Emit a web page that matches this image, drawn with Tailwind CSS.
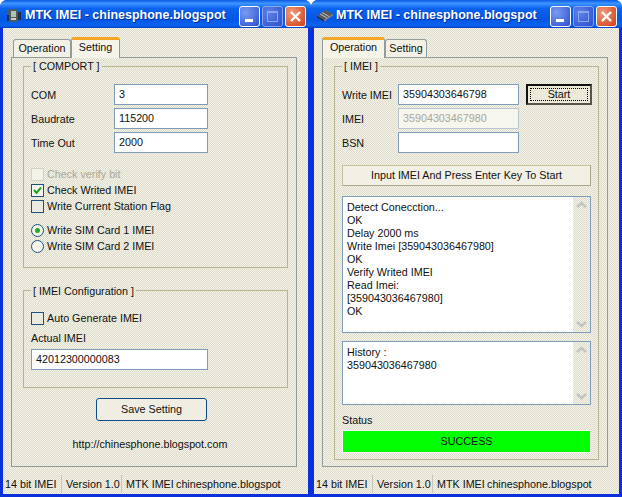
<!DOCTYPE html>
<html lang="en">
<head>
  <meta charset="UTF-8" />
  <title>MTK IMEI</title>
  <script src="https://cdn.jsdelivr.net/npm/@tailwindcss/browser@4"></script>
</head>
<body class="bg-white">
  <div class="flex w-[622px] h-[497px] overflow-hidden font-['Liberation_Sans',sans-serif] text-[10.75px] leading-4 text-[#111]">

    <!-- left window: setting tab -->
    <div class="w-[311px] h-[497px] flex flex-col rounded-t-[7px] overflow-hidden bg-[#0a2fdc]">
      <div class="h-[28px] shrink-0 flex items-center pt-[2px] pl-[5px] pr-[5px] bg-[linear-gradient(#0a5ae6_0%,#3d95ff_12%,#0a63ee_30%,#0555e4_70%,#0a64f0_90%,#0340c8_100%)]">
        <svg width="18" height="18" viewBox="0 0 18 18" class="shrink-0"><path d="M4 3h7l2 2v10l-2 1H5l-2-1V5z" fill="#4c5c58"/><path d="M6 5h5v6H6z" fill="#a9c4b4"/><path d="M6 12h5v2H6z" fill="#c8d0c8"/><path d="M13 6h3v8h-3z" fill="#20304c"/><path d="M2 9h2v6H2z" fill="#1c2a60"/></svg>
        <span class="ml-[2px] font-bold text-[12.5px] text-white whitespace-nowrap [text-shadow:1px_1px_0_#0030a0]">MTK IMEI - chinesphone.blogspot</span>
        <div class="ml-auto mt-[2px] flex gap-[2px]">
          <div class="w-[21px] h-[21px] rounded-[3px] border border-white bg-[radial-gradient(circle_at_30%_30%,#7a9cf0,#2a4fd0)] flex items-end pl-[5px] pb-[4px]"><div class="w-[8px] h-[3px] bg-white"></div></div>
          <div class="w-[21px] h-[21px] rounded-[3px] border border-[#8aa6ee] bg-[radial-gradient(circle_at_30%_30%,#5f82e6,#2a4fd0)] flex items-center justify-center"><div class="w-[11px] h-[11px] border border-[#8aa6ee] border-t-2"></div></div>
          <div class="w-[21px] h-[21px] rounded-[3px] border border-white bg-[radial-gradient(circle_at_30%_30%,#f09a7c,#d03c14)] flex items-center justify-center">
            <svg width="13" height="13" viewBox="0 0 13 13"><path d="M2 2l9 9M11 2l-9 9" stroke="#fff" stroke-width="2.4"/></svg>
          </div>
        </div>
      </div>

      <div class="mx-[3px] h-[466px] flex flex-col bg-[repeating-conic-gradient(#f6f4e8_0_25%,#dcdacb_0_50%)] bg-[length:2px_2px]">
        <div class="pl-[2px] pt-[9px] ml-[8px] h-[30px] flex items-end relative z-10 -mb-px">
          <div class="w-[58px] h-[18px] mb-px border border-[#919b9c] border-b-0 rounded-t-[3px] text-center leading-[17px] bg-[#f3f1e6]">Operation</div>
          <div class="w-[49px] h-[21px] border border-[#919b9c] border-b-0 border-t-[3px] border-t-[#f5a623] rounded-t-[3px] text-center leading-[15px] bg-[#f6f4e8]">Setting</div>
        </div>
        <div class="ml-[8px] w-[286px] h-[410px] border border-[#919b9c] pl-[11px] flex flex-col">
          <fieldset class="w-[265px] h-[210px] border border-[#b5b58f] pl-[7px]">
            <legend class="h-4 px-[2px] leading-4">[ COMPORT ]</legend>
            <div class="mt-[10px] flex flex-col gap-[3px]">
              <div class="flex items-center h-[21px]"><span class="w-[83px]">COM</span><div class="w-[94px] h-[21px] bg-white border border-[#7f9db9] pl-[4px] leading-[19px]">3</div></div>
              <div class="flex items-center h-[21px]"><span class="w-[83px]">Baudrate</span><div class="w-[94px] h-[21px] bg-white border border-[#7f9db9] pl-[4px] leading-[19px]">115200</div></div>
              <div class="flex items-center h-[21px]"><span class="w-[83px]">Time Out</span><div class="w-[94px] h-[21px] bg-white border border-[#7f9db9] pl-[4px] leading-[19px]">2000</div></div>
            </div>
            <div class="mt-[13px] flex flex-col">
              <div class="h-4 flex items-center gap-[3px] text-[#a8a898]"><div class="w-[13px] h-[13px] border border-[#d4d2c4] bg-[#f4f3ea]"></div>Check verify bit</div>
              <div class="h-4 flex items-center gap-[3px]"><div class="w-[13px] h-[13px] border border-[#1c5180] bg-[#f8f8f2] flex items-center justify-center"><svg width="9" height="9" viewBox="0 0 9 9"><path d="M1 4l2.500 3L8 1.500" stroke="#21a121" stroke-width="2" fill="none"/></svg></div>Check Writed IMEI</div>
              <div class="h-4 flex items-center gap-[3px]"><div class="w-[13px] h-[13px] border border-[#1c5180] bg-[#eceade]"></div>Write Current Station Flag</div>
            </div>
            <div class="mt-[8px] flex flex-col">
              <div class="h-4 flex items-center gap-[3px]"><div class="w-[13px] h-[13px] rounded-full border border-[#1c5180] bg-[#f6f5ec] flex items-center justify-center"><div class="w-[5px] h-[5px] rounded-full bg-[#21b021]"></div></div>Write SIM Card 1 IMEI</div>
              <div class="h-4 flex items-center gap-[3px]"><div class="w-[13px] h-[13px] rounded-full border border-[#1c5180] bg-[#f6f5ec]"></div>Write SIM Card 2 IMEI</div>
            </div>
          </fieldset>
          <fieldset class="mt-[14px] w-[265px] h-[106px] border border-[#b5b58f] pl-[7px]">
            <legend class="h-4 px-[2px] leading-[19px]">[ IMEI Configuration ]</legend>
            <div class="mt-[12px] h-4 flex items-center gap-[3px]"><div class="w-[13px] h-[13px] border border-[#1c5180] bg-[#eceade]"></div>Auto Generate IMEI</div>
            <div class="mt-[4px] h-4">Actual IMEI</div>
            <div class="mt-[3px] w-[177px] h-[21px] bg-white border border-[#7f9db9] pl-[4px] leading-[19px]">42012300000083</div>
          </fieldset>
          <div class="mt-[10px] ml-[73px] w-[111px] h-[23px] rounded-[3px] border border-[#0f4a8a] bg-[#f0eee2] text-center leading-[21px]">Save Setting</div>
          <div class="mt-[15px] w-[254px] text-center">http://chinesphone.blogspot.com</div>
        </div>
        <div class="mt-[5px] h-[22px] pt-px flex items-center whitespace-nowrap">
          <div class="w-[59px] pl-[2px] border-r border-[#c9c7b6] leading-[18px]">14 bit IMEI</div>
          <div class="w-[60px] pl-[4px] border-r border-[#c9c7b6] leading-[18px]">Version 1.0</div>
          <div class="w-[50px] pl-[4px] leading-[18px]">MTK IMEI</div>
          <div class="pl-[4px] leading-[18px]">chinesphone.blogspot</div>
        </div>
      </div>
    </div>

    <!-- right window: operation tab -->
    <div class="w-[311px] h-[497px] flex flex-col rounded-t-[7px] overflow-hidden bg-[#0a2fdc]">
      <div class="h-[28px] shrink-0 flex items-center pt-[2px] pl-[5px] pr-[5px] bg-[linear-gradient(#0a5ae6_0%,#3d95ff_12%,#0a63ee_30%,#0555e4_70%,#0a64f0_90%,#0340c8_100%)]">
        <svg width="18" height="18" viewBox="0 0 18 18" class="shrink-0"><path d="M1 10l9-6 7 4-9 6z" fill="#5a5a5a"/><path d="M1 10l7 4v1.500L1 11.500z" fill="#2a2a2a"/><path d="M8 14l9-6v1.500l-9 6z" fill="#8a8a8a"/><path d="M4 8l7 4M6 6.500l7 4" stroke="#d8d8d8" stroke-width=".8"/></svg>
        <span class="ml-[2px] font-bold text-[12.5px] text-white whitespace-nowrap [text-shadow:1px_1px_0_#0030a0]">MTK IMEI - chinesphone.blogspot</span>
        <div class="ml-auto mt-[2px] flex gap-[2px]">
          <div class="w-[21px] h-[21px] rounded-[3px] border border-white bg-[radial-gradient(circle_at_30%_30%,#7a9cf0,#2a4fd0)] flex items-end pl-[5px] pb-[4px]"><div class="w-[8px] h-[3px] bg-white"></div></div>
          <div class="w-[21px] h-[21px] rounded-[3px] border border-[#8aa6ee] bg-[radial-gradient(circle_at_30%_30%,#5f82e6,#2a4fd0)] flex items-center justify-center"><div class="w-[11px] h-[11px] border border-[#8aa6ee] border-t-2"></div></div>
          <div class="w-[21px] h-[21px] rounded-[3px] border border-white bg-[radial-gradient(circle_at_30%_30%,#f09a7c,#d03c14)] flex items-center justify-center">
            <svg width="13" height="13" viewBox="0 0 13 13"><path d="M2 2l9 9M11 2l-9 9" stroke="#fff" stroke-width="2.4"/></svg>
          </div>
        </div>
      </div>

      <div class="mx-[3px] h-[466px] flex flex-col bg-[repeating-conic-gradient(#f6f4e8_0_25%,#dcdacb_0_50%)] bg-[length:2px_2px]">
        <div class="pt-[9px] ml-[8px] h-[30px] flex items-end relative z-10 -mb-px">
          <div class="w-[63px] h-[21px] border border-[#919b9c] border-b-0 border-t-[3px] border-t-[#f5a623] rounded-t-[3px] text-center leading-[15px] bg-[#f6f4e8]">Operation</div>
          <div class="w-[42px] h-[18px] mb-px border border-[#919b9c] border-b-0 rounded-t-[3px] text-center leading-[17px] bg-[#f3f1e6]">Setting</div>
        </div>
        <div class="ml-[8px] w-[286px] h-[410px] border border-[#919b9c] pl-[11px]">
          <fieldset class="w-[265px] h-[402px] border border-[#b5b58f] pl-[7px]">
            <legend class="h-4 px-[2px] leading-4">[ IMEI ]</legend>
            <div class="mt-[10px] flex flex-col gap-[3px]">
              <div class="flex items-center h-[21px]">
                <span class="w-[56px] whitespace-nowrap">Write IMEI</span>
                <div class="w-[121px] h-[21px] bg-white border border-[#7f9db9] pl-[4px] leading-[19px]">35904303646798</div>
                <div class="ml-[7px] w-[66px] h-[21px] p-[2px] border-2 border-[#111] border-r-[#55534a] border-b-[#55534a] bg-[#ece9d8]"><div class="h-[13px] border border-dotted border-black text-center leading-[11px]">Start</div></div>
              </div>
              <div class="flex items-center h-[21px]"><span class="w-[56px]">IMEI</span><div class="w-[121px] h-[21px] bg-[#f6f5ee] border border-[#b9c6d2] pl-[4px] leading-[19px] text-[#a8a898]">35904303467980</div></div>
              <div class="flex items-center h-[21px]"><span class="w-[56px]">BSN</span><div class="w-[121px] h-[21px] bg-white border border-[#7f9db9]"></div></div>
            </div>
            <div class="mt-[12px] w-[249px] h-[21px] border border-[#c4c39f] border-b-[#a8a78a] border-r-[#a8a78a] text-center leading-[19px] bg-[#f2f0e4]">Input IMEI And Press Enter Key To Start</div>
            <div class="mt-[10px] w-[249px] h-[137px] flex bg-white border border-[#7f9db9]">
              <div class="flex-1 pl-[4px] pt-[4px] leading-[13px] whitespace-nowrap">
                Detect Conecction...<br />OK<br />Delay 2000 ms<br />Write Imei [359043036467980]<br />OK<br />Verify Writed IMEI<br />Read Imei:<br />[359043036467980]<br />OK
              </div>
              <div class="w-[17px] flex flex-col justify-between items-center py-[4px] bg-[repeating-conic-gradient(#f6f4e8_0_25%,#dcdacb_0_50%)] bg-[length:2px_2px]">
                <svg width="11" height="8" viewBox="0 0 11 8"><path d="M1 6l4.500-4L10 6" stroke="#c4c4c0" stroke-width="2.500" fill="none"/></svg>
                <svg width="11" height="8" viewBox="0 0 11 8"><path d="M1 2l4.500 4L10 2" stroke="#c4c4c0" stroke-width="2.500" fill="none"/></svg>
              </div>
            </div>
            <div class="mt-[8px] w-[249px] h-[64px] flex bg-white border border-[#7f9db9]">
              <div class="flex-1 pl-[4px] pt-[4px] leading-[13px]">History :<br />359043036467980</div>
              <div class="w-[17px] flex flex-col justify-between items-center py-[4px] bg-[repeating-conic-gradient(#f6f4e8_0_25%,#dcdacb_0_50%)] bg-[length:2px_2px]">
                <svg width="11" height="8" viewBox="0 0 11 8"><path d="M1 6l4.500-4L10 6" stroke="#c4c4c0" stroke-width="2.500" fill="none"/></svg>
                <svg width="11" height="8" viewBox="0 0 11 8"><path d="M1 2l4.500 4L10 2" stroke="#c4c4c0" stroke-width="2.500" fill="none"/></svg>
              </div>
            </div>
            <div class="mt-[7px] h-4">Status</div>
            <div class="mt-[2px] w-[249px] h-[23px] bg-[#00ff00] border border-[#f4f4ec] text-center leading-[21px]">SUCCESS</div>
          </fieldset>
        </div>
        <div class="mt-[5px] h-[22px] pt-px flex items-center whitespace-nowrap">
          <div class="w-[59px] pl-[2px] border-r border-[#c9c7b6] leading-[18px]">14 bit IMEI</div>
          <div class="w-[60px] pl-[4px] border-r border-[#c9c7b6] leading-[18px]">Version 1.0</div>
          <div class="w-[50px] pl-[4px] leading-[18px]">MTK IMEI</div>
          <div class="pl-[4px] leading-[18px]">chinesphone.blogspot</div>
        </div>
      </div>
    </div>

  </div>
</body>
</html>
